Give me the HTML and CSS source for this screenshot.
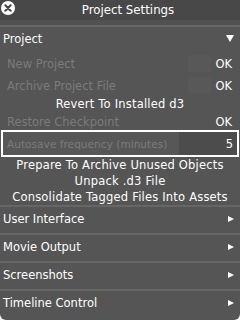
FILE: index.html
```html
<!DOCTYPE html>
<html lang="en">
<head>
    <meta charset="UTF-8">
    <meta name="viewport" content="width=device-width, initial-scale=1.0">
    <title>Project Settings</title>
    <link rel="stylesheet" href="styles.css">
</head>
<body>
    <div class="panel">
        <header class="titlebar">
            <span class="close">
                <svg width="14" height="14" viewBox="0 0 14 14">
                    <circle cx="7" cy="7" r="7" fill="#fff"/>
                    <path d="M4.3 4.3 L9.7 9.7 M9.7 4.3 L4.3 9.7" stroke="#444" stroke-width="2" stroke-linecap="round"/>
                </svg>
            </span>
            <h1>Project Settings</h1>
        </header>
        <div class="title-gap"></div>

        <div class="section-head open">
            <span>Project</span>
            <span class="tri-down"></span>
        </div>

        <div class="row">
            <span class="label disabled">New Project</span>
            <span class="ok-box"></span>
            <span class="ok">OK</span>
        </div>
        <div class="row">
            <span class="label disabled">Archive Project File</span>
            <span class="ok-box"></span>
            <span class="ok">OK</span>
        </div>
        <div class="action tall">Revert To Installed d3</div>
        <div class="row short">
            <span class="label disabled">Restore Checkpoint</span>
            <span class="ok">OK</span>
        </div>

        <div class="field">
            <span class="field-label">Autosave frequency (minutes)</span>
            <span class="field-value">5</span>
        </div>

        <div class="action">Prepare To Archive Unused Objects</div>
        <div class="action">Unpack .d3 File</div>
        <div class="action">Consolidate Tagged Files Into Assets</div>

        <div class="section-head">
            <span>User Interface</span>
            <span class="tri-right"></span>
        </div>
        <div class="section-head">
            <span>Movie Output</span>
            <span class="tri-right"></span>
        </div>
        <div class="section-head">
            <span>Screenshots</span>
            <span class="tri-right"></span>
        </div>
        <div class="section-head">
            <span>Timeline Control</span>
            <span class="tri-right"></span>
        </div>
    </div>
</body>
</html>
```

FILE: styles.css
```css
body {
    margin: 0;
    padding: 0;
    background-color: #fff;
    font-family: "DejaVu Sans", sans-serif;
}

.panel {
    width: 240px;
    height: 320px;
    background-color: #555;
    color: #fff;
    border-radius: 0 0 6px 6px;
    overflow: hidden;
}

.titlebar {
    height: 20px;
    background-color: #484848;
    display: flex;
    align-items: center;
    justify-content: center;
    padding-left: 16px;
    position: relative;
}

.titlebar h1 {
    margin: 0;
    font-size: 11.8px;
    font-weight: normal;
    color: #fff;
}

.close {
    position: absolute;
    left: 1px;
    top: 1px;
    width: 14px;
    height: 14px;
}

.close svg {
    display: block;
}

.title-gap {
    height: 5px;
    border-bottom: 2px solid #666;
    background-color: #515151;
}

.section-head {
    height: 28px;
    box-sizing: border-box;
    border-top: 2px solid #666;
    display: flex;
    align-items: center;
    justify-content: space-between;
    padding: 0 6px 2px 3px;
    font-size: 11.5px;
}

.section-head.open {
    border-top: none;
    height: 25px;
    padding-top: 1px;
    padding-bottom: 3px;
}

.tri-down {
    width: 0;
    height: 0;
    border-left: 4px solid transparent;
    border-right: 4px solid transparent;
    border-top: 7px solid #fff;
}

.tri-right {
    width: 0;
    height: 0;
    border-top: 3.5px solid transparent;
    border-bottom: 3.5px solid transparent;
    border-left: 6px solid #fff;
}

.row {
    height: 22px;
    display: flex;
    align-items: center;
    padding: 1px 8px 0 7px;
    box-sizing: border-box;
    font-size: 11.5px;
}

.row.short {
    height: 17px;
}

.label {
    flex: 1;
    white-space: nowrap;
}

.disabled {
    color: #7b7b7b;
}

.ok-box {
    width: 23px;
    height: 17px;
    background-color: #585858;
    margin-right: 4px;
}

.ok {
    color: #fff;
}

.field {
    margin: 0 1px;
    height: 27px;
    box-sizing: border-box;
    border: 2px solid #fff;
    display: flex;
    font-size: 10.6px;
}

.field-label {
    flex: 1;
    min-width: 0;
    white-space: nowrap;
    background-color: #575757;
    color: #7b7b7b;
    padding-left: 4px;
    display: flex;
    align-items: center;
}

.field-value {
    width: 58px;
    flex-shrink: 0;
    background-color: #4c4c4c;
    padding-right: 4px;
    box-sizing: border-box;
    display: flex;
    align-items: center;
    justify-content: flex-end;
    font-size: 11.5px;
}

.action {
    height: 16px;
    line-height: 16px;
    text-align: center;
    white-space: nowrap;
    letter-spacing: 0.2px;
    font-size: 11.5px;
}

.action.tall {
    height: 17px;
    line-height: 17px;
}
```
